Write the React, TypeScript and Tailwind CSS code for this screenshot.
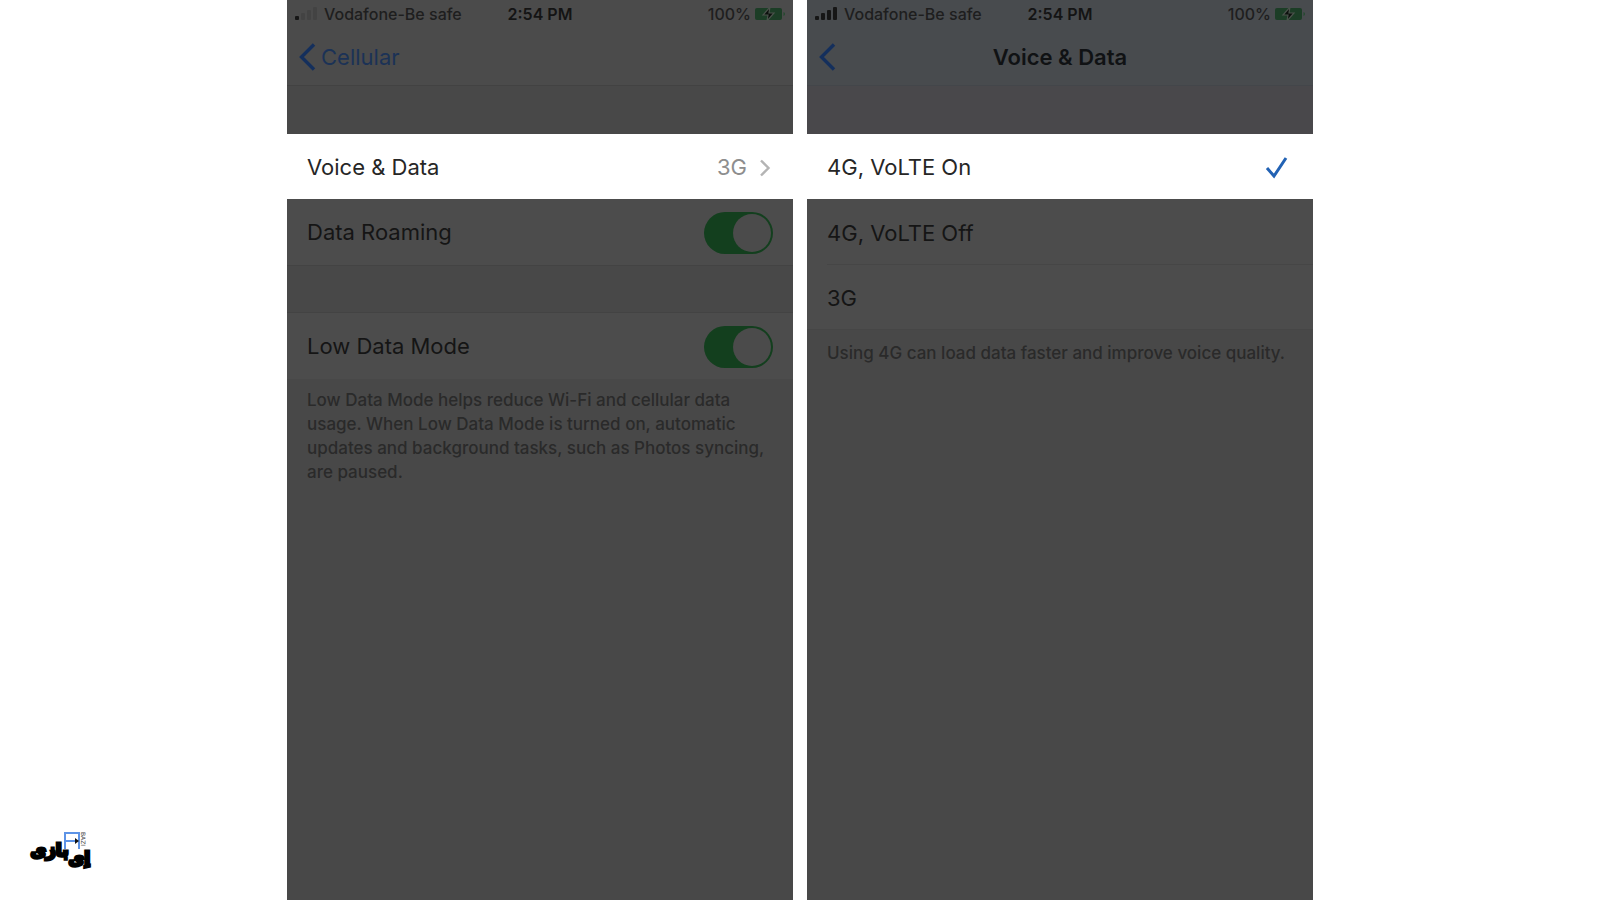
import React from "react";

function StatusBar({ bars }: { bars: number }) {
    return (
        <div className="grid h-7 grid-cols-[1fr_auto_1fr] items-center px-2 text-[16px] font-medium text-[#1e1e1e]">
            <div className="flex items-center gap-[5px]">
                <svg width="24" height="14" viewBox="0 0 24 14" aria-hidden="true">
                    {[0, 1, 2, 3].map((i) => (
                        <rect
                            key={i}
                            x={i * 6}
                            y={9 - i * 3}
                            width="4"
                            height={4 + i * 3}
                            rx="1"
                            fill={i < bars ? "#161616" : "#434343"}
                        />
                    ))}
                </svg>
                <span>Vodafone-Be safe</span>
            </div>
            <span className="font-semibold text-[#141414]">2:54 PM</span>
            <div className="flex items-center justify-end gap-1">
                <span>100%</span>
                <svg width="30" height="14" viewBox="0 0 30 14" aria-hidden="true">
                    <rect x="0" y="1" width="27" height="12" rx="2" fill="#1c3d26" />
                    <path d="M28.500 5v4q1.500-.5 1.500-2t-1.500-2z" fill="#234a2e" />
                    <path d="M15 0 8 8h5l-1 6 7-8h-5z" fill="#0c100d" stroke="#4a524b" strokeWidth="1.200" />
                </svg>
            </div>
        </div>
    );
}

function BackIcon() {
    return (
        <svg width="18" height="30" viewBox="0 0 18 30" fill="none" aria-hidden="true">
            <path d="M16 2.500 3.500 15 16 27.500" stroke="#142f5c" strokeWidth="3.400" />
        </svg>
    );
}

function ToggleRow({ label }: { label: string }) {
    return (
        <label className="flex h-[66px] items-center justify-between bg-[#4c4c4c] px-5 pt-px text-[#151515]">
            {label}
            <input
                type="checkbox"
                defaultChecked
                className="h-[42px] w-[69px] appearance-none rounded-full bg-[#133f1e] before:ml-[29px] before:mt-[2px] before:block before:size-[38px] before:rounded-full before:bg-[#4b4b4b]"
            />
        </label>
    );
}

export default function App() {
    return (
        <main className="relative flex min-h-screen justify-center gap-[14px] overflow-hidden bg-white font-['Inter',sans-serif] text-[22px]">
            {/* Cellular settings */}
            <section className="w-[506px] max-w-1/2 bg-[#484848]">
                <header className="h-[86px] border-b border-[#424242] bg-[#4b4b4b]">
                    <StatusBar bars={1} />
                    <button className="ml-[11px] flex h-[58px] items-center gap-[5px] text-[#1b3256]">
                        <BackIcon />
                        Cellular
                    </button>
                </header>
                <button className="mt-12 flex h-[65px] w-full items-center justify-between bg-white px-5 pt-0.5 text-[#262626]">
                    Voice &amp; Data
                    <span className="flex items-center gap-3 text-[#8e8e8e]">
                        3G
                        <svg width="14" height="18" viewBox="0 0 14 18" fill="none" aria-hidden="true">
                            <path d="m2 1.500 7.500 7.500L2 16.500" stroke="#b4b4b4" strokeWidth="2.400" />
                        </svg>
                    </span>
                </button>
                <ToggleRow label="Data Roaming" />
                <div className="h-12 border-y border-[#434343]" />
                <ToggleRow label="Low Data Mode" />
                <p className="px-5 pt-[9px] text-[17px] leading-6 font-medium text-[#2a2a2a]">
                    Low Data Mode helps reduce Wi-Fi and cellular data usage. When Low Data Mode is turned on, automatic
                    updates and background tasks, such as Photos syncing, are paused.
                </p>
            </section>

            {/* Voice & Data settings */}
            <section className="w-[506px] max-w-1/2 bg-[#484848]">
                <header className="h-[86px] border-b border-[#43464a] bg-[#484b4e]">
                    <StatusBar bars={4} />
                    <div className="grid h-[58px] grid-cols-[1fr_auto_1fr] items-center px-[11px]">
                        <button aria-label="Back" className="w-fit">
                            <BackIcon />
                        </button>
                        <h1 className="font-semibold text-[#101214]">Voice &amp; Data</h1>
                    </div>
                </header>
                <div className="h-12 bg-[#49484b]" />
                <button className="flex h-[65px] w-full items-center justify-between bg-white pl-5 pr-6 pt-0.5 text-[#262626]">
                    4G, VoLTE On
                    <svg width="24" height="22" viewBox="0 0 24 22" fill="none" aria-label="Selected">
                        <path d="m2 11 7 8L21 1" stroke="#2262b4" strokeWidth="3" />
                    </svg>
                </button>
                <button className="block h-[66px] w-full bg-[#4c4c4c] pl-5 text-left text-[#151515]">
                    <span className="flex h-full items-center border-b border-[#464646] pt-[3px]">4G, VoLTE Off</span>
                </button>
                <button className="flex h-[65px] w-full items-center border-b border-[#464646] bg-[#4c4c4c] pl-5 pt-[3px] text-[#151515]">
                    3G
                </button>
                <p className="px-5 pt-[11px] text-[17px] leading-6 font-medium text-[#2a2a2a]">
                    Using 4G can load data faster and improve voice quality.
                </p>
            </section>

            {/* Site watermark */}
            <div
                dir="rtl"
                className="absolute bottom-7 left-[30px] flex h-10 w-[60px] font-['DejaVu_Sans',sans-serif] text-[17px] leading-9 font-black text-black [-webkit-text-stroke:3px_black]"
            >
                <span className="mt-2">اِی</span>
                <span>بازی</span>
                <svg className="absolute top-0 left-[34px]" width="17" height="17" viewBox="0 0 17 17" fill="none" aria-hidden="true">
                    <path d="M1 17V1h14v16M1 9h12" stroke="#5d93e6" strokeWidth="2" />
                    <path d="m11 6 4 3-4 3z" fill="#111" />
                </svg>
                <span
                    dir="ltr"
                    className="absolute top-0 left-[50px] text-[6px] leading-[6px] font-normal text-[#444] [-webkit-text-stroke:0] [writing-mode:vertical-rl]"
                >
                    BAZI
                </span>
            </div>
        </main>
    );
}
